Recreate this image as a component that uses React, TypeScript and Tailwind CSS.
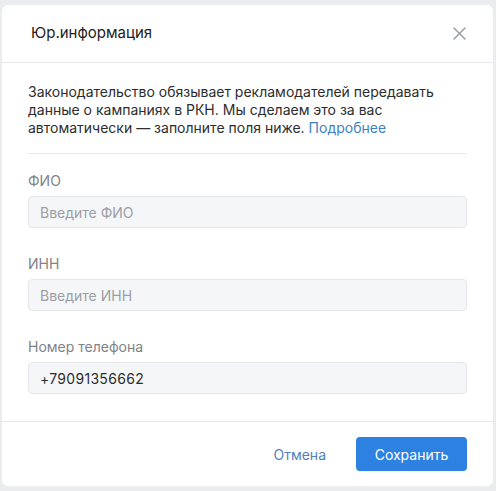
import React from 'react';

const fields = [
  { label: 'ФИО', placeholder: 'Введите ФИО', value: '' },
  { label: 'ИНН', placeholder: 'Введите ИНН', value: '' },
  { label: 'Номер телефона', placeholder: '', value: '+79091356662' },
];

const App = () => {
  return (
    <div className="w-[496px] h-[491px] bg-[#ebecef] pt-[5px] pl-[2px] pr-[3px] font-['Inter',sans-serif]">
      <div className="bg-white rounded-[6px] h-[481px] flex flex-col">
        <div className="h-[58px] shrink-0 flex items-center justify-between pl-[29px] pr-[27px] border-b border-[#e7e8ec]">
          <span className="text-[15px] text-[#222]">Юр.информация</span>
          <svg width="13" height="13" viewBox="0 0 13 13" className="text-[#9a9ea5]">
            <path d="M1 1 L12 12 M12 1 L1 12" stroke="currentColor" strokeWidth="1.5" strokeLinecap="round" />
          </svg>
        </div>

        <div className="px-[26px] pt-[20px] flex-1">
          <p className="text-[14px] leading-[18px] text-[#2c2d2e] pb-[16px] border-b border-[#e7e8ec] whitespace-nowrap">
            Законодательство обязывает рекламодателей передавать
            <br />
            данные о кампаниях в РКН. Мы сделаем это за вас
            <br />
            автоматически — заполните поля ниже. <span className="text-[#3f7fc0]">Подробнее</span>
          </p>

          <div className="flex flex-col gap-[28px] pt-[19px]">
            {fields.map((f) => (
              <div key={f.label} className="flex flex-col gap-[7px]">
                <span className="text-[14px] leading-[16px] text-[#808286]">{f.label}</span>
                <div className="h-[32px] rounded-[4px] border border-[#e6e7ea] bg-[#f5f6f8] flex items-center px-[11px] text-[14px]">
                  {f.value ? (
                    <span className="text-[#2c2d2e] tracking-[0.3px]">{f.value}</span>
                  ) : (
                    <span className="text-[#9a9ea5]">{f.placeholder}</span>
                  )}
                </div>
              </div>
            ))}
          </div>
        </div>

        <div className="h-[65px] shrink-0 border-t border-[#e7e8ec] flex items-center justify-end gap-[30px] pr-[26px]">
          <span className="text-[14px] text-[#5181b8]">Отмена</span>
          <button className="h-[34px] w-[111px] rounded-[4px] bg-[#2d81e0] text-white text-[14px]">Сохранить</button>
        </div>
      </div>
    </div>
  );
};

export default App;
